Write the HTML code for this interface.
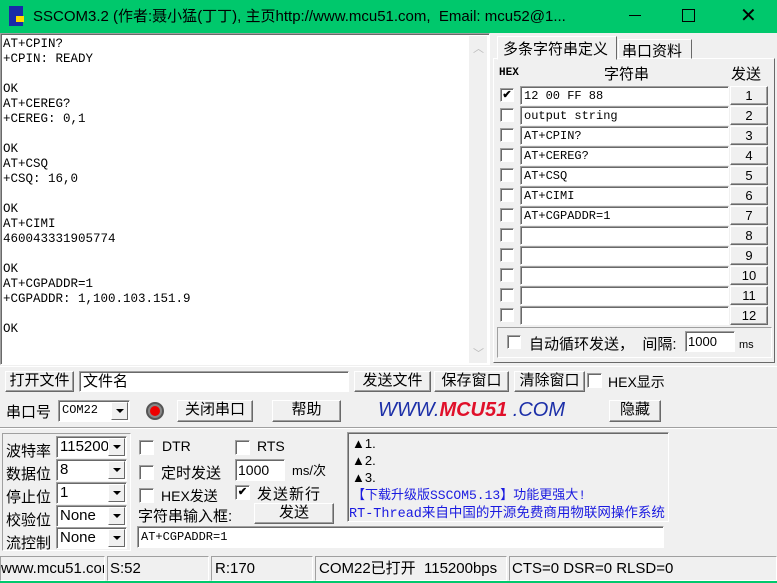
<!DOCTYPE html>
<html><head><meta charset="utf-8"><style>
*{box-sizing:border-box;margin:0;padding:0}
body{width:777px;height:583px;background:#f0f0f0;position:relative;overflow:hidden;font-family:"Liberation Sans","Noto Sans CJK SC",sans-serif;font-size:13px;color:#000}
.a{position:absolute}
.mono{font-family:"Liberation Mono","Noto Sans CJK SC",monospace;font-size:12px;letter-spacing:0}
.btn{position:absolute;background:#f0f0f0;border:1px solid;border-color:#fff #696969 #696969 #fff;box-shadow:inset -1px -1px 0 #a0a0a0;text-align:center;font-size:14px;line-height:18px}
.inp{position:absolute;background:#fff;border:1px solid;border-color:#a0a0a0 #fff #fff #a0a0a0;box-shadow:inset 1px 1px 0 #696969}
.cb{position:absolute;width:14px;height:14px;background:#fff;border:1px solid;border-color:#a0a0a0 #fff #fff #a0a0a0;box-shadow:inset 1px 1px 0 #696969;font-size:11px;line-height:12px;text-align:center;font-weight:bold}
.combo{position:absolute;background:#fff;border:1px solid;border-color:#a0a0a0 #fff #fff #a0a0a0;box-shadow:inset 1px 1px 0 #696969;font-size:15px;line-height:19px;padding-left:3px}
.combo i{position:absolute;right:1px;top:1px;width:17px;height:18px;background:#f0f0f0;border:1px solid;border-color:#fff #696969 #696969 #fff}
.combo i:after{content:"";position:absolute;left:4px;top:6px;border:4px solid transparent;border-top:4px solid #000}
.lbl{position:absolute;font-size:14px;white-space:nowrap}
</style></head><body>
<div class="a" style="left:0;top:0;width:777px;height:33px;background:#00c86c"></div>
<div class="a" style="left:9px;top:6px;width:14px;height:20px;background:#1a2aa8"></div>
<div class="a" style="left:16px;top:16px;width:8px;height:6px;background:#ffd800"></div>
<div class="a" style="left:33px;top:5px;font-size:15px;white-space:nowrap">SSCOM3.2 (作者:聂小猛(丁丁), 主页http://www.mcu51.com,&nbsp; Email: mcu52@1...</div>
<div class="a" style="left:629px;top:15px;width:12px;height:1px;background:#000"></div>
<div class="a" style="left:682px;top:9px;width:13px;height:13px;border:1px solid #000"></div>
<div class="a" style="left:740px;top:6px;font-size:20px;line-height:20px">✕</div>

<div class="a" style="left:0;top:33px;width:490px;height:332px;background:#fff;border:1px solid;border-color:#a0a0a0 #fff #fff #a0a0a0;box-shadow:inset 1px 1px 0 #696969"></div>
<div class="a" style="left:469px;top:36px;width:18px;height:327px;background:#f0f0f0"></div>
<div class="a" style="left:473px;top:40px;color:#bbb;font-size:11px">︿</div>
<div class="a" style="left:473px;top:345px;color:#bbb;font-size:11px">﹀</div>
<div class="a mono" style="left:3px;top:37px;line-height:15px;white-space:pre;font-size:12.5px">AT+CPIN?
+CPIN: READY

OK
AT+CEREG?
+CEREG: 0,1

OK
AT+CSQ
+CSQ: 16,0

OK
AT+CIMI
460043331905774

OK
AT+CGPADDR=1
+CGPADDR: 1,100.103.151.9

OK</div>

<div class="a" style="left:493px;top:58px;width:282px;height:305px;border:1px solid;border-color:#fff #696969 #696969 #fff"></div>
<div class="a" style="left:497px;top:36px;width:120px;height:24px;border:1px solid;border-color:#fff #696969 transparent #fff;background:#f0f0f0;font-size:15px;padding:1px 5px">多条字符串定义</div>
<div class="a" style="left:618px;top:39px;width:74px;height:20px;border:1px solid;border-color:#fff #696969 transparent #fff;font-size:15px;padding:0 3px">串口资料</div>
<div class="a mono" style="left:499px;top:67px;font-weight:bold;font-size:11px">HEX</div>
<div class="lbl" style="left:604px;top:63px;font-size:15px">字符串</div>
<div class="lbl" style="left:731px;top:63px;font-size:15px">发送</div>

<div id="rows"></div>
<script>
var t=["12 00 FF 88","output string","AT+CPIN?","AT+CEREG?","AT+CSQ","AT+CIMI","AT+CGPADDR=1","","","","",""],h="";
for(var i=0;i<12;i++){var y=86+i*20;
h+='<div class="cb" style="left:500px;top:'+(y+2)+'px">'+(i==0?'✔':'')+'</div>';
h+='<div class="inp mono" style="left:520px;top:'+y+'px;width:209px;height:19px;padding:1px 3px;line-height:16px">'+t[i]+'</div>';
h+='<div class="btn" style="left:730px;top:'+y+'px;width:38px;height:19px;font-size:13px;line-height:17px">'+(i+1)+'</div>';}
document.getElementById('rows').innerHTML=h;
</script>
<div class="a" style="left:497px;top:327px;width:275px;height:31px;border:1px solid;border-color:#a0a0a0 #fff #fff #a0a0a0"></div>
<div class="cb" style="left:507px;top:335px"></div>
<div class="lbl" style="left:529px;top:333px;font-size:15px">自动循环发送，&nbsp; 间隔:</div>
<div class="inp" style="left:685px;top:331px;width:50px;height:21px;font-size:13px;padding:2px">1000</div>
<div class="lbl" style="left:739px;top:339px;font-size:11px">ms</div>

<div class="a" style="left:0;top:366px;width:777px;height:1px;background:#fff"></div>
<div class="btn" style="left:5px;top:371px;width:69px;height:21px;font-size:15px">打开文件</div>
<div class="inp" style="left:79px;top:371px;width:270px;height:21px;font-size:15px;padding:0 3px;line-height:19px">文件名</div>
<div class="btn" style="left:354px;top:371px;width:77px;height:21px;font-size:15px">发送文件</div>
<div class="btn" style="left:434px;top:371px;width:75px;height:21px;font-size:15px">保存窗口</div>
<div class="btn" style="left:514px;top:371px;width:71px;height:21px;font-size:15px">清除窗口</div>
<div class="cb" style="left:587px;top:373px;width:15px;height:15px"></div>
<div class="lbl" style="left:608px;top:372px;font-size:14px">HEX显示</div>

<div class="lbl" style="left:6px;top:401px;font-size:15px">串口号</div>
<div class="combo mono" style="left:58px;top:400px;width:72px;height:22px;font-size:12px">COM22<i></i></div>
<div class="a" style="left:146px;top:402px;width:18px;height:18px;border-radius:50%;background:#888;border:2px solid #555"></div>
<div class="a" style="left:150px;top:406px;width:10px;height:10px;border-radius:50%;background:#e00"></div>
<div class="btn" style="left:177px;top:400px;width:76px;height:22px;font-size:15px">关闭串口</div>
<div class="btn" style="left:272px;top:400px;width:69px;height:22px;font-size:15px">帮助</div>
<div class="a" style="left:378px;top:399px;font-size:20px;font-style:italic;color:#1c2fa8;white-space:nowrap">WWW.<span style="color:#e0102a;font-weight:bold">MCU51</span> .COM</div>
<div class="btn" style="left:609px;top:400px;width:52px;height:22px;font-size:15px">隐藏</div>

<div class="a" style="left:0;top:427px;width:777px;height:2px;border-top:1px solid #a0a0a0;border-bottom:1px solid #fff"></div>
<div class="a" style="left:2px;top:433px;width:129px;height:118px;border:1px solid;border-color:#a0a0a0 #fff #fff #a0a0a0"></div>
<div class="lbl" style="left:6px;top:440px;font-size:15px;line-height:23px">波特率<br>数据位<br>停止位<br>校验位<br>流控制</div>
<div class="combo" style="left:56px;top:436px;width:71px;height:22px">115200<i></i></div>
<div class="combo" style="left:56px;top:459px;width:71px;height:22px">8<i></i></div>
<div class="combo" style="left:56px;top:482px;width:71px;height:22px">1<i></i></div>
<div class="combo" style="left:56px;top:505px;width:71px;height:22px">None<i></i></div>
<div class="combo" style="left:56px;top:527px;width:71px;height:22px">None<i></i></div>

<div class="cb" style="left:139px;top:440px;width:15px;height:15px"></div>
<div class="lbl" style="left:162px;top:438px">DTR</div>
<div class="cb" style="left:235px;top:440px;width:15px;height:15px"></div>
<div class="lbl" style="left:257px;top:438px">RTS</div>
<div class="cb" style="left:139px;top:465px;width:15px;height:15px"></div>
<div class="lbl" style="left:161px;top:462px;font-size:15px">定时发送</div>
<div class="inp" style="left:235px;top:459px;width:50px;height:22px;font-size:14px;padding:2px">1000</div>
<div class="lbl" style="left:292px;top:460px;font-size:13px">ms/次</div>
<div class="cb" style="left:139px;top:488px;width:15px;height:15px"></div>
<div class="lbl" style="left:161px;top:486px;font-size:14px">HEX发送</div>
<div class="cb" style="left:235px;top:485px;width:15px;height:15px">✔</div>
<div class="lbl" style="left:257px;top:483px;font-size:15px;letter-spacing:1px">发送新行</div>
<div class="lbl" style="left:138px;top:505px;font-size:15px">字符串输入框:</div>
<div class="btn" style="left:254px;top:503px;width:80px;height:21px;font-size:15px">发送</div>
<div class="inp mono" style="left:137px;top:526px;width:527px;height:22px;padding:3px 3px">AT+CGPADDR=1</div>

<div class="a" style="left:347px;top:432px;width:322px;height:90px;border:1px solid;border-color:#a0a0a0 #fff #fff #a0a0a0;box-shadow:inset 1px 1px 0 #696969;overflow:hidden;white-space:nowrap;padding:2px 4px;font-size:13px;line-height:17px">▲1.<br>▲2.<br>▲3.<br><span class="mono" style="color:#1a1ae0;font-size:13px">【下载升级版SSCOM5.13】功能更强大!</span><br><span class="mono" style="color:#1a1ae0;margin-left:-3px;font-size:13.5px">RT-Thread来自中国的开源免费商用物联网操作系统</span></div>

<div class="a" style="left:0;top:556px;width:777px;height:25px;font-size:15px;line-height:23px;white-space:nowrap">
<div class="a" style="left:0;top:0;width:105px;height:25px;border:1px solid;border-color:#a0a0a0 #fff #fff #a0a0a0;overflow:hidden">www.mcu51.com</div>
<div class="a" style="left:107px;top:0;width:102px;height:25px;border:1px solid;border-color:#a0a0a0 #fff #fff #a0a0a0;padding-left:2px">S:52</div>
<div class="a" style="left:211px;top:0;width:102px;height:25px;border:1px solid;border-color:#a0a0a0 #fff #fff #a0a0a0;padding-left:3px">R:170</div>
<div class="a" style="left:315px;top:0;width:192px;height:25px;border:1px solid;border-color:#a0a0a0 #fff #fff #a0a0a0;padding-left:3px;overflow:hidden">COM22已打开&nbsp; 115200bps</div>
<div class="a" style="left:509px;top:0;width:268px;height:25px;border:1px solid;border-color:#a0a0a0 #fff #fff #a0a0a0;padding-left:2px;overflow:hidden">CTS=0 DSR=0 RLSD=0</div>
</div>
<div class="a" style="left:0;top:581px;width:777px;height:2px;background:#00c86c"></div>
</body></html>
